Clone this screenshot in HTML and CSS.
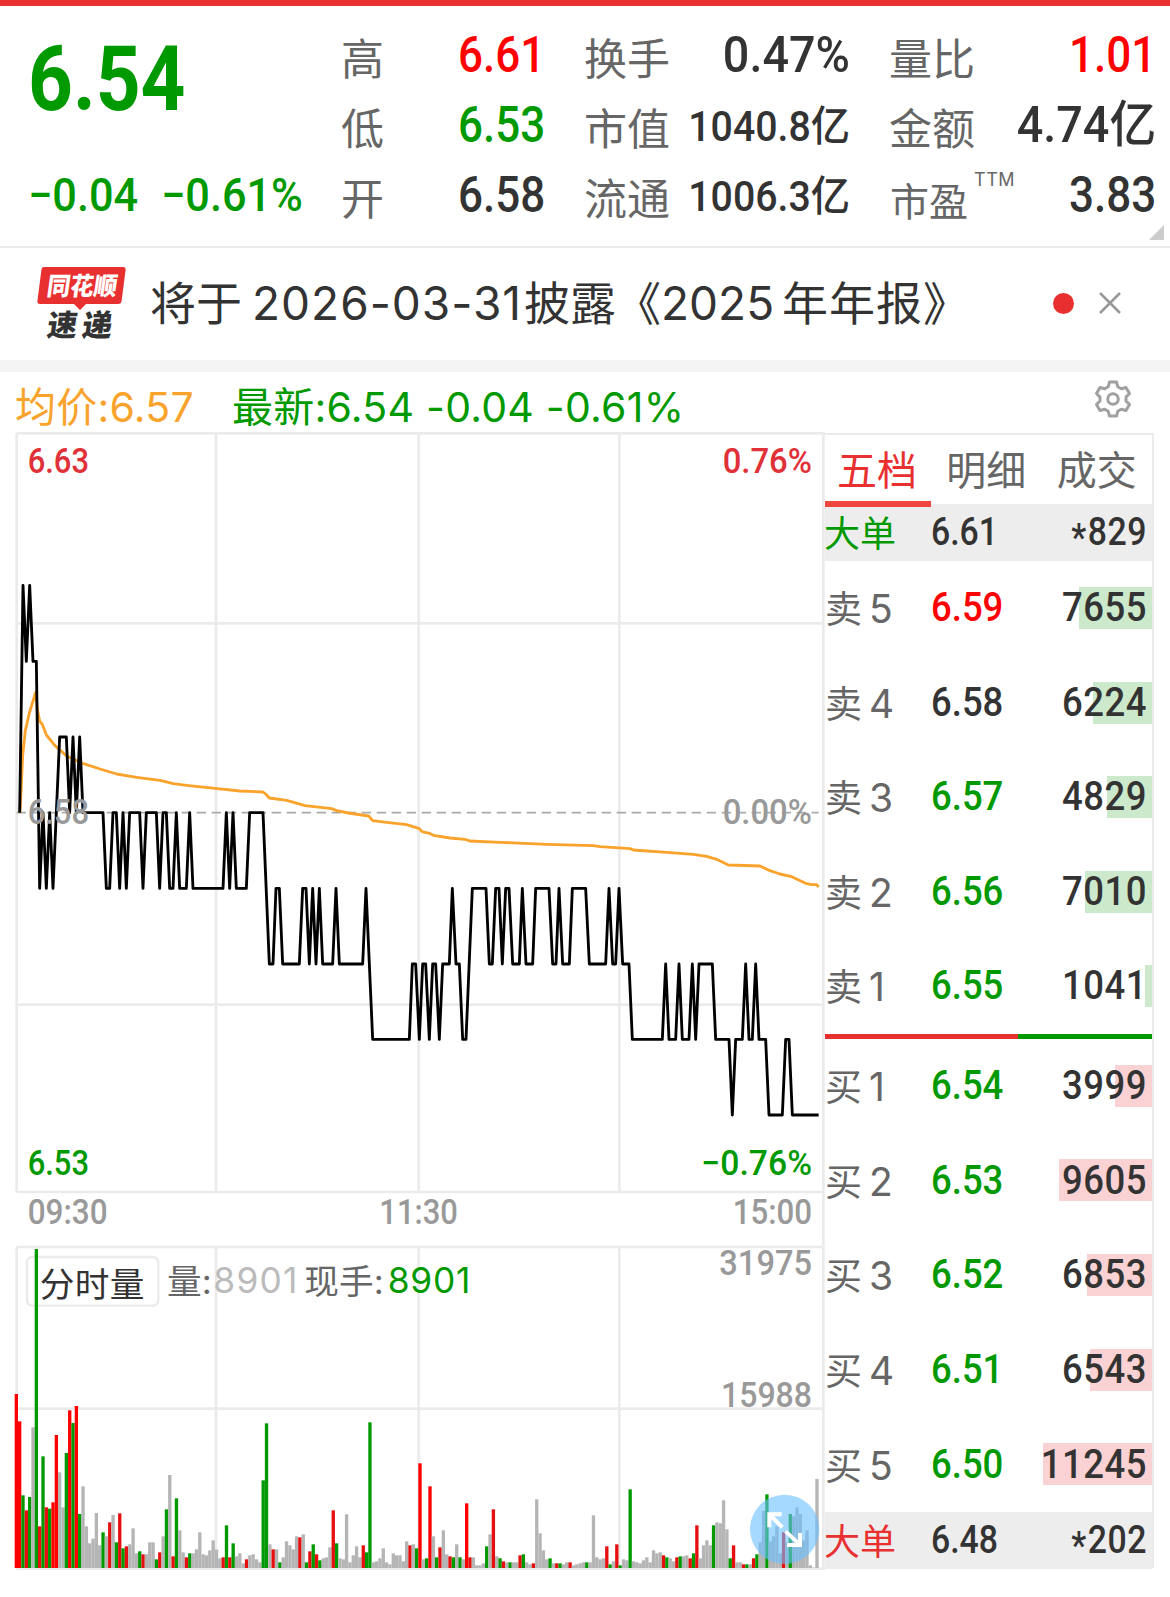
FILE: index.html
```html
<!DOCTYPE html>
<html lang="zh-CN">
<head>
    <meta charset="UTF-8">
    <meta name="viewport" content="width=device-width, initial-scale=1.0">
    <title>分时行情</title>
    <link rel="stylesheet" href="styles.css">
</head>
<body>
    <header class="quote">
        <div class="price down">
            <div class="last"><span class="num">6.54</span></div>
            <div class="change"><span class="num">−0.04</span><span class="num">−0.61%</span></div>
        </div>
        <div class="stats">
            <div class="stat"><span class="label">高</span><span class="num up">6.61</span></div>
            <div class="stat"><span class="label">低</span><span class="num down">6.53</span></div>
            <div class="stat"><span class="label">开</span><span class="num">6.58</span></div>
        </div>
        <div class="stats">
            <div class="stat"><span class="label">换手</span><span class="num wide">0.47%</span></div>
            <div class="stat"><span class="label">市值</span><span class="num wide small">1040.8亿</span></div>
            <div class="stat"><span class="label">流通</span><span class="num wide small">1006.3亿</span></div>
        </div>
        <div class="stats">
            <div class="stat"><span class="label">量比</span><span class="num up">1.01</span></div>
            <div class="stat"><span class="label">金额</span><span class="num wide">4.74亿</span></div>
            <div class="stat"><span class="label pe">市盈<sup>TTM</sup></span><span class="num">3.83</span></div>
        </div>
        <i class="corner"></i>
    </header>

    <div class="news">
        <svg class="logo" width="92" height="84" viewBox="0 0 92 84">
            <path fill="#e93030" d="M8 7h79q3 0 2.600 3l-4 31q-.4 3-3.400 3H50l-6 6-6-6H4q-3 0-2.600-3l4-31Q5.700 7 8 7z"/>
            <text class="logo-top" transform="translate(10 35) skewX(-8)" textLength="70" lengthAdjust="spacingAndGlyphs">同花顺</text>
            <text class="logo-bottom" transform="translate(10 76) skewX(-8)" textLength="65">速递</text>
        </svg>
        <p class="news-text">将于<span class="news-date">2026-03-31</span>披露<span class="book-l">《</span>2025<span class="year">年年报》</span></p>
        <i class="dot"></i>
        <svg class="close" width="24" height="24" viewBox="0 0 24 24"><path d="M2 2l20 20M22 2L2 22"/></svg>
    </div>

    <div class="info">
        <span class="avg">均价:6.57</span>
        <span class="latest down">最新:6.54 -0.04 -0.61%</span>
        <svg class="gear" width="38" height="38" viewBox="-19 -19 38 38">
            <path d="M-3.500-17h7L4.800-12.200 8.200-10.300 13-11.500 16.500-5.500 13-1.900V1.900L16.500 5.500 13 11.500 8.200 10.300 4.800 12.200 3.500 17h-7L-4.800 12.200-8.200 10.300-13 11.500-16.500 5.500-13 1.900V-1.900L-16.500-5.500-13-11.500-8.200-10.300-4.800-12.200z"/>
            <circle r="5.300"/>
        </svg>
    </div>

    <main class="main">
        <div class="charts">
            <!-- 3 units per pixel in both charts -->
            <svg class="price-chart" width="810" height="813" viewBox="45 0 2430 2439">
                <path class="grid" d="M50 4H2475M50 574H2470M50 1718H2470M50 2280H2470M50 4V2280M648 4V2280M1256 4V2280M1858 4V2280M2470 4V2439"/>
                <path class="base" d="M50 1142H2456"/>
                <polyline class="avg-line" points="60,1142 68,971 76,896 88,843 107,781 112,832 119,867 127,877 139,909 165,941 200,972 250,995 310,1014 350,1026 410,1036 480,1045 520,1055 560,1060 645,1069 720,1077 789,1080 800,1089 808,1098 860,1105 915,1121 995,1130 1010,1136 1045,1143 1106,1152 1118,1166 1160,1171 1220,1178 1258,1190 1266,1199 1288,1204 1300,1210 1350,1218 1395,1222 1410,1227 1500,1231 1640,1237 1780,1241 1800,1244 1890,1250 1900,1254 2000,1261 2080,1267 2120,1273 2150,1282 2185,1299 2280,1302 2310,1316 2340,1326 2375,1334 2420,1355 2435,1358 2450,1358 2456,1365"/>
                <polyline class="price-line" points="59,1142 69,460 79,688 89,460 99,688 109,688 119,1369 129,1142 139,1369 149,1142 159,1369 169,1142 179,915 199,915 209,1142 219,915 229,1142 239,915 249,1142 309,1142 319,1369 329,1369 339,1142 349,1142 359,1369 369,1142 379,1369 389,1142 419,1142 429,1369 439,1142 469,1142 479,1369 489,1142 499,1142 509,1369 519,1369 529,1142 539,1369 559,1369 569,1142 579,1369 669,1369 679,1142 689,1369 699,1142 709,1369 739,1369 749,1142 789,1142 808,1596 819,1596 828,1369 838,1369 848,1596 898,1596 908,1369 918,1369 928,1596 938,1369 948,1596 958,1369 968,1596 998,1596 1008,1369 1018,1596 1088,1596 1098,1369 1118,1822 1228,1822 1237,1596 1247,1596 1258,1822 1268,1596 1277,1596 1288,1822 1298,1596 1307,1596 1318,1822 1328,1596 1348,1596 1357,1369 1368,1596 1378,1596 1388,1822 1398,1822 1417,1369 1458,1369 1468,1596 1477,1596 1487,1369 1497,1369 1507,1596 1517,1369 1527,1369 1538,1596 1558,1596 1567,1369 1578,1596 1598,1596 1607,1369 1647,1369 1658,1596 1668,1596 1677,1369 1688,1596 1708,1596 1717,1369 1757,1369 1768,1596 1817,1596 1827,1369 1838,1596 1847,1596 1857,1369 1868,1596 1887,1596 1897,1822 1987,1822 1997,1596 2007,1822 2027,1822 2037,1596 2047,1822 2067,1822 2077,1596 2087,1822 2097,1596 2137,1596 2147,1822 2187,1822 2197,2049 2207,1822 2227,1822 2237,1596 2247,1822 2257,1822 2267,1596 2277,1822 2297,1822 2307,2049 2347,2049 2357,1822 2367,1822 2377,2049 2456,2049"/>
                <g class="axis">
                    <text class="axis-up" x="83" y="123" textLength="184" lengthAdjust="spacingAndGlyphs">6.63</text>
                    <text class="axis-up" x="2168" y="123" textLength="268" lengthAdjust="spacingAndGlyphs">0.76%</text>
                    <text x="83" y="1175" textLength="184" lengthAdjust="spacingAndGlyphs">6.58</text>
                    <text x="2168" y="1175" textLength="268" lengthAdjust="spacingAndGlyphs">0.00%</text>
                    <text class="axis-down" x="83" y="2228" textLength="184" lengthAdjust="spacingAndGlyphs">6.53</text>
                    <text class="axis-down" x="2104" y="2228" textLength="332" lengthAdjust="spacingAndGlyphs">−0.76%</text>
                    <text x="83" y="2376" textLength="240" lengthAdjust="spacingAndGlyphs">09:30</text>
                    <text x="1138" y="2376" textLength="236" lengthAdjust="spacingAndGlyphs">11:30</text>
                    <text x="2198" y="2376" textLength="238" lengthAdjust="spacingAndGlyphs">15:00</text>
                </g>
            </svg>
            <svg class="volume-chart" width="810" height="325" viewBox="45 45 2430 975">
                <path class="grid" d="M50 51H2470M50 536H2470M50 1016H2475M50 51V1016M648 51V1016M1256 51V1016M1858 51V1016M2470 45V1016"/>
                <rect class="tag" x="81" y="81" width="394" height="146" rx="16"/>
                <g id="bars"></g>
                <text class="tag-text" x="119" y="200" textLength="314">分时量</text>
                <text class="vol-label" x="501" y="191">量:</text>
                <text class="vol-value" x="640" y="188" textLength="252">8901</text>
                <text class="vol-label" x="913" y="191">现手:</text>
                <text class="vol-now" x="1163" y="188" textLength="248">8901</text>
                <g class="axis">
                    <text x="2158" y="135" textLength="278" lengthAdjust="spacingAndGlyphs">31975</text>
                    <text x="2163" y="530" textLength="273" lengthAdjust="spacingAndGlyphs">15988</text>
                </g>
                <circle class="expand" cx="2354" cy="898" r="104"/>
                <path class="expand-arrow" d="M2345 853H2308V892M2310 855L2347 892M2400 909V945H2361M2357 904L2398 943"/>
            </svg>
        </div>

        <div class="book">
            <div class="tabs">
                <span class="tab active">五档</span>
                <span class="tab">明细</span>
                <span class="tab">成交</span>
            </div>
            <div class="big-order"><span class="name down">大单</span><span class="num">6.61</span><span class="num vol"><span class="star">*</span>829</span></div>
            <div class="row sell"><span class="name">卖<b>5</b></span><span class="num up">6.59</span><span class="num vol">7655</span><i class="bar" style="width:73px"></i></div>
            <div class="row sell"><span class="name">卖<b>4</b></span><span class="num">6.58</span><span class="num vol">6224</span><i class="bar" style="width:59px"></i></div>
            <div class="row sell"><span class="name">卖<b>3</b></span><span class="num down">6.57</span><span class="num vol">4829</span><i class="bar" style="width:45px"></i></div>
            <div class="row sell"><span class="name">卖<b>2</b></span><span class="num down">6.56</span><span class="num vol">7010</span><i class="bar" style="width:67px"></i></div>
            <div class="row sell"><span class="name">卖<b>1</b></span><span class="num down">6.55</span><span class="num vol">1041</span><i class="bar" style="width:7px"></i></div>
            <div class="ratio"><i style="width:59%"></i></div>
            <div class="row buy"><span class="name">买<b>1</b></span><span class="num down">6.54</span><span class="num vol">3999</span><i class="bar" style="width:37px"></i></div>
            <div class="row buy"><span class="name">买<b>2</b></span><span class="num down">6.53</span><span class="num vol">9605</span><i class="bar" style="width:93px"></i></div>
            <div class="row buy"><span class="name">买<b>3</b></span><span class="num down">6.52</span><span class="num vol">6853</span><i class="bar" style="width:65px"></i></div>
            <div class="row buy"><span class="name">买<b>4</b></span><span class="num down">6.51</span><span class="num vol">6543</span><i class="bar" style="width:62px"></i></div>
            <div class="row buy"><span class="name">买<b>5</b></span><span class="num down">6.50</span><span class="num vol">11245</span><i class="bar" style="width:109px"></i></div>
            <div class="big-order"><span class="name red">大单</span><span class="num">6.48</span><span class="num vol"><span class="star">*</span>202</span></div>
        </div>
    </main>
    <script src="chart.js"></script>
</body>
</html>
```

FILE: styles.css
```css
* { box-sizing: border-box; }
body { margin: 0; background: #fff; color: #333; font-family: Inter, "Noto Sans CJK SC", sans-serif; border-top: 6px solid #e93030; }
i, b { font-style: normal; font-weight: 400; }
svg { overflow: visible; }

.num { font-family: Roboto, "Noto Sans CJK SC", sans-serif; font-weight: 500; display: inline-block; transform: scaleX(.88); transform-origin: right center; white-space: nowrap; }
.up { color: #f00; }
.down { color: #090; }
.red { color: #e93030; }

/* quote header */
.quote { position: relative; display: grid; grid-template-columns: 274px 204px 266px 267px; column-gap: 39px; height: 242px; padding: 14px 0 0 28px; border-bottom: 2px solid #ebebeb; }
.price .num { transform-origin: left center; }
.last { height: 140px; line-height: 116px; font-size: 90px; }
.last .num { font-weight: 700; transform: scaleX(.87); }
.change { display: flex; gap: 16px; height: 70px; line-height: 70px; font-size: 46px; }
.change .num { transform: scaleX(.94); }
.stat { display: flex; justify-content: space-between; height: 70px; line-height: 70px; }
.stat .label { flex: none; font-size: 43px; color: #666; padding-top: 4px; }
.stat .num { font-size: 50px; }
.stat .wide { transform: scaleX(.935); }
.stat .small { font-size: 42px; padding-top: 2px; }
.stat .label.pe { display: flex; font-size: 39px; padding: 7px 0 0 1px; }
.pe sup { font-size: 18px; line-height: 26px; margin-left: 6px; letter-spacing: .5px; }
.corner { position: absolute; right: 6px; bottom: 6px; border-left: 15px solid transparent; border-bottom: 15px solid #ccc; }

/* news strip */
.news { display: flex; align-items: center; height: 124px; border-bottom: 12px solid #f4f4f4; padding-left: 36px; }
.logo { margin-top: -4px; }
.logo-top { font: 900 25px "Noto Sans CJK SC", sans-serif; fill: #fff; }
.logo-bottom { font: 900 30px "Noto Sans CJK SC", sans-serif; fill: #333; }
.news-text { margin: -8px 0 0 22px; width: 903px; font-size: 46px; white-space: nowrap; }
.news-date { margin: 0 2px 0 10px; letter-spacing: 1px; }
.book-l { margin-left: -1px; }
.year { margin-left: 8px; letter-spacing: 1px; }
.dot { width: 21px; height: 21px; border-radius: 50%; background: #e93030; margin-top: -2px; }
.close { margin: -2px 0 0 24px; fill: none; stroke: #999; stroke-width: 2.6; }

/* average / latest line */
.info { display: flex; align-items: center; height: 60px; padding: 4px 38px 0 15px; font-size: 41px; letter-spacing: .25px; white-space: nowrap; }
.avg { width: 217px; color: #f9a32c; }
.gear { margin: -11px 0 0 auto; fill: none; stroke: #a0a0a0; stroke-width: 3; stroke-linejoin: round; }

.main { display: flex; padding-left: 15px; }
.charts { width: 810px; height: 1138px; }
.charts svg { display: block; }

/* charts */
.grid { fill: none; stroke: #ebebeb; stroke-width: 8; }
.base { stroke: #aaa; stroke-width: 5; stroke-dasharray: 28 17; }
.avg-line, .price-line { fill: none; stroke: #f9a32c; stroke-width: 8.5; stroke-linejoin: round; }
.price-line { stroke: #000; }
.axis { font: 500 105px Roboto, sans-serif; fill: #999; }
.axis-up { fill: #e03038; }
.axis-down { fill: #090; }
.tag { fill: #fff; stroke: #ebebeb; stroke-width: 7; }
.tag-text { font: 104px "Noto Sans CJK SC", sans-serif; fill: #333; }
.vol-label { font: 104px Inter, "Noto Sans CJK SC", sans-serif; fill: #666; }
.vol-value, .vol-now { font: 106px Inter, sans-serif; fill: #bbb; }
.vol-now { fill: #090; }
.bar-r { fill: #e60f0f; }
.bar-g { fill: #090; }
.bar-w { fill: #b5b5b5; }
.bar-hot { fill: #f00; }
.expand { fill: #6bc0ff; fill-opacity: .6; }
.expand-arrow { fill: none; stroke: #fff; stroke-width: 12; }

/* order book */
.book { width: 329px; height: 1135px; margin-top: 1px; border: 2px solid #ebebeb; border-left: 0; border-bottom: 0; }
.tabs { display: flex; height: 69px; font-size: 40px; line-height: 71px; color: #666; }
.tab { width: 112px; padding-left: 15px; }
.active { width: 108px; padding-left: 12px; color: #e93030; border-bottom: 6px solid #f0483c; height: 72px; z-index: 1; }
.big-order, .row { position: relative; display: grid; grid-template-columns: 106px 90px 126px; align-items: center; height: 94.700px; }
.sell { height: 94.500px; }
.big-order { height: 57px; background: #ededed; font-size: 38px; line-height: 57px; }
.name { color: #666; font-size: 37px; white-space: nowrap; margin-top: -2px; }
.big-order .name { font-size: 36px; margin: 2px 0 0 -1px; }
.big-order .down { color: #090; }
.big-order .red { color: #e93030; }
.name b { font-size: 39px; margin-left: 7px; }
.row .num { font-size: 41px; }
.row .num, .big-order .num { transform: scaleX(.89); transform-origin: left center; position: relative; z-index: 1; top: -1px; }
.row .vol, .big-order .vol { transform-origin: right center; text-align: right; letter-spacing: .6px; }
.star { display: inline-block; line-height: 20px; transform: translateY(6px); margin-right: 1px; }
.bar { position: absolute; right: 0; top: 26px; height: 42px; background: #cce9cc; }
.buy .bar { background: #fad2d4; }
.ratio { height: 5px; background: #090; }
.ratio i { display: block; height: 5px; background: #e93030; }
```

FILE: chart.js
```js
// one entry per minute: colour + bar height
const volumes = `r522 r440 g218 r173 g213 w422 g957 r125 g335 r182 g178 r197 r399 w287 w182 g345 r473 g435 r486 g162
w245 w125 w74 w88 w165 w68 g107 w95 r137 w159 g77 r164 g59 r65 w71 w119 w44 g50 r41 w41
w77 w77 g26 r47 w95 g176 w279 r35 g209 w113 w47 r32 g44 w44 w56 w107 w41 w38 w53 w83
w55 w29 r32 g128 r32 g74 w35 w44 w14 r26 w38 w41 w26 w17 g263 g434 w71 r56 w56 g17
w32 w80 w68 w56 w95 r92 w101 g17 r50 g71 r41 g23 w29 w32 w62 r173 g74 w29 w26 w161
w17 w38 w65 w32 r68 g47 g437 w17 w20 w29 w59 w17 w11 w44 w38 w38 w20 w80 r68 w71
g59 r314 w26 g29 r245 w95 g32 r62 w113 w41 r35 g32 w71 g32 w26 r194 r32 w32 w8 w8
w14 g65 w101 r176 w35 g29 r20 w17 g17 w17 w17 r38 g41 w17 w11 r14 w206 w104 w53 w26
g29 w14 r14 g14 w11 w17 r17 w8 w11 w14 w17 g17 w17 w158 w32 w26 w29 r65 g11 w20
r71 g8 w26 w23 g236 w20 w17 w14 w23 w32 w17 w53 w44 w47 r38 g32 w29 w20 r32 g35
w35 w38 r29 g44 r128 w29 w68 w83 w68 g128 w137 w134 w203 w116 g29 r68 w17 w17 r11 g11
w11 r29 g41 w77 w172 g221 w80 w95 w125 w44 r107 w77 g162 w155 w182 w162 w83 w113 w8 w1 w267`.split(/\s+/);

const bars = document.getElementById("bars");
volumes.forEach((item, i) => {
    const h = Number(item.slice(1));
    const rect = document.createElementNS("http://www.w3.org/2000/svg", "rect");
    rect.setAttribute("x", 44 + i * 10.008);
    rect.setAttribute("y", 1014 - h);
    rect.setAttribute("width", 10);
    rect.setAttribute("height", h);
    rect.setAttribute("class", item[0] === "r" && h > 190 ? "bar-hot" : "bar-" + item[0]);
    bars.appendChild(rect);
});
```
